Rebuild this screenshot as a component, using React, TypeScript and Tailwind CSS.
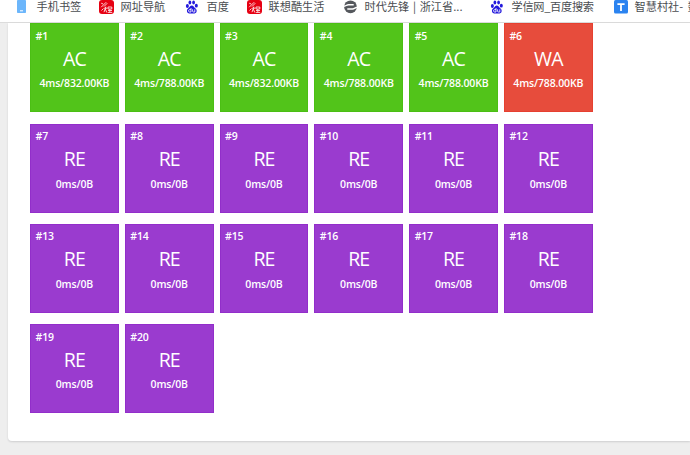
const PhoneIcon = () => (
  <svg width="15" height="15" viewBox="0 0 15 15">
    <rect x="2" y="0" width="9" height="13" rx="0.8" fill="#6cb6fb" />
    <rect x="5" y="10.3" width="3" height="1" fill="#fff" />
  </svg>
);

const RedIcon = () => (
  <svg width="15" height="15" viewBox="0 0 15 15">
    <rect width="15" height="14" rx="3" fill="#e60012" />
    <g stroke="#fff" strokeWidth="0.9" fill="none" opacity="0.9">
      <path d="M2.2 3.2l2 .8M2.2 7.2l5-5M5 6.5l3.3-3.3M2.5 10.5l2-2" />
      <path d="M5.2 8.2h3M5 12.2l1.8-5.5M6.3 9l1.5 3.5M9 7h3.8v2H9zM9 10.5h4M10.8 9v3.5M8.8 12.4h4.4" />
    </g>
  </svg>
);

const PawIcon = () => (
  <svg width="15" height="14" viewBox="0 0 15 14">
    <g fill="#2319dc">
      <ellipse cx="2.4" cy="6" rx="1.5" ry="1.9" />
      <ellipse cx="4.9" cy="2.4" rx="1.4" ry="2" />
      <ellipse cx="8.6" cy="2.4" rx="1.4" ry="2" />
      <ellipse cx="11.3" cy="5.7" rx="1.5" ry="1.9" />
      <path d="M6.8 5.4c1.5 0 2 1.4 2.9 2.3 1.2 1 2.3 2 1.9 3.8-.4 1.8-2 2.2-4.8 1.9-2.8.3-4.4-.1-4.8-1.9-.4-1.8.7-2.8 1.9-3.8.9-.9 1.4-2.3 2.9-2.3z" />
    </g>
    <path
      d="M6 8v4H4.6c-1.4 0-1.4-2.4 0-2.4H6M7.6 9.3v2c0 .5.3.7.8.7h1.4V9.3"
      stroke="#fff"
      strokeWidth="0.85"
      fill="none"
    />
  </svg>
);

const GlobeIcon = () => (
  <svg width="15" height="15" viewBox="0 0 15 15">
    <circle cx="7.5" cy="6.8" r="6.4" fill="#55585d" />
    <path
      d="M.5 6.4c2.2 0 3-1.7 5-1.7h5.2M14.5 7.2c-2.2 0-3 1.8-5 1.8H4.3"
      stroke="#fff"
      strokeWidth="1.4"
      fill="none"
    />
  </svg>
);

const VillageIcon = () => (
  <svg width="15" height="15" viewBox="0 0 15 15">
    <rect x="1" y="0" width="14" height="13.5" rx="1.5" fill="#2b83f0" />
    <path d="M4.4 4.1h7.2M8 4.1v7" stroke="#fff" strokeWidth="1.8" fill="none" />
  </svg>
);

const bookmarks = [
  { title: "手机书签", icon: <PhoneIcon />, width: "w-[84px]" },
  { title: "网址导航", icon: <RedIcon />, width: "w-[86px]" },
  { title: "百度", icon: <PawIcon />, width: "w-[62px]" },
  { title: "联想酷生活", icon: <RedIcon />, width: "w-24" },
  { title: "时代先锋 | 浙江省...", icon: <GlobeIcon />, width: "w-[147px] [word-spacing:1.2px]" },
  { title: "学信网_百度搜索", icon: <PawIcon />, width: "w-[123px] tracking-[-0.3px]" },
  { title: "智慧村社- 数", icon: <VillageIcon />, width: "w-[120px] [word-spacing:2px]" },
];

const colors: Record<string, string> = {
  AC: "bg-[#52c41a] border-[#4bbf14]",
  WA: "bg-[#e74c3c] border-[#e64030]",
  RE: "bg-[#9a3bcf] border-[#922eca]",
};

const firstRow = ["832", "788", "832", "788", "788", "788"];

const cases = Array.from({ length: 20 }, (_, i) => {
  if (i < 6) {
    return { id: i + 1, status: i === 5 ? "WA" : "AC", usage: `4ms/${firstRow[i]}.00KB` };
  }
  return { id: i + 1, status: "RE", usage: "0ms/0B" };
});

const TestCase = ({ id, status, usage }: { id: number; status: string; usage: string }) => (
  <div className={`h-[89px] w-[88.8px] border text-center text-white ${colors[status]}`}>
    <div className="pl-[4.5px] pt-[4.5px] text-left text-[10.5px] font-semibold leading-[15px] tracking-[-0.15px]">
      #{id}
    </div>
    <div className="mt-[1px] text-[19.5px] leading-[27px] tracking-[-0.9px]">{status}</div>
    <div className="mt-[4.5px] whitespace-nowrap text-[10.5px] font-semibold leading-[15px] tracking-[-0.15px]">
      {usage}
    </div>
  </div>
);

export default function App() {
  return (
    <div className="flex h-[455px] w-[690px] flex-col overflow-hidden bg-[#eeeeee] font-['Open_Sans',sans-serif]">
      <div className="flex h-[23px] shrink-0 overflow-hidden border-b border-[#dcdcdc] bg-white pl-[15px] font-['Noto_Sans_CJK_SC',sans-serif]">
        {bookmarks.map(b => (
          <div key={b.title} className={`flex h-[14px] shrink-0 items-center gap-[6.5px] ${b.width}`}>
            <span className="flex w-[15px] shrink-0 justify-center">{b.icon}</span>
            <span className="-mt-px whitespace-nowrap text-[11.2px] leading-[13px] text-[#4a4d51]">{b.title}</span>
          </div>
        ))}
      </div>
      <div className="ml-2 h-[418px] rounded-bl-[4px] bg-white pl-[22px] pt-[0.3px] shadow-[0_1px_2px_rgba(34,36,38,0.15)]">
        <div className="grid w-[563px] grid-cols-6 gap-x-[5.7px] gap-y-[11.25px]">
          {cases.map(c => (
            <TestCase key={c.id} {...c} />
          ))}
        </div>
      </div>
    </div>
  );
}
